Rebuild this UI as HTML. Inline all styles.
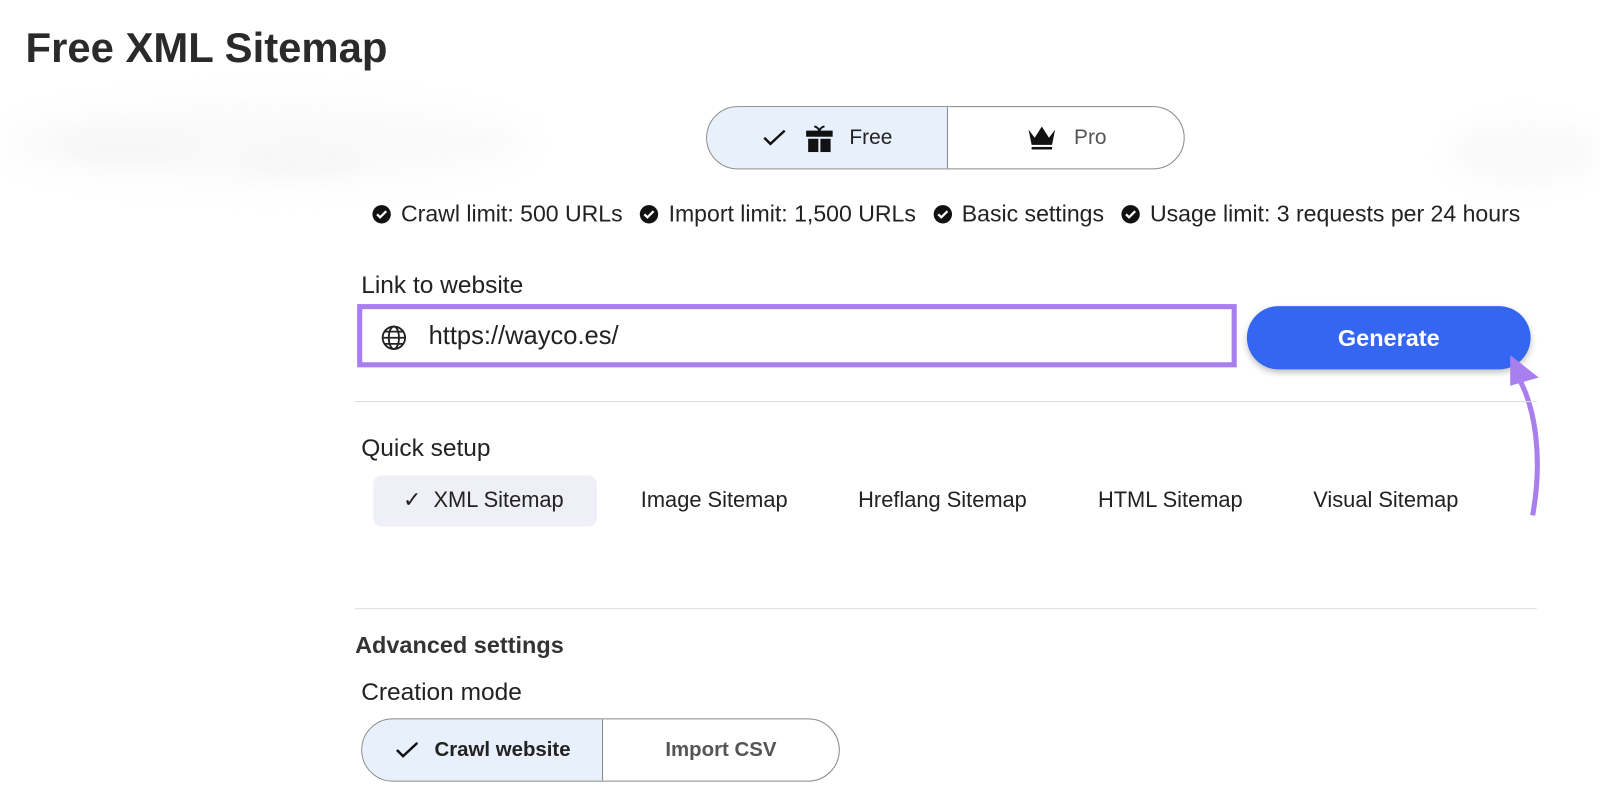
<!DOCTYPE html><html><head><style>
body{margin:0;width:1600px;height:810px;background:#fff;font-family:"Liberation Sans",Arial,sans-serif;color:#222;overflow:hidden}
#w{position:relative;width:1568px;height:794px;transform:scale(1.0204);transform-origin:0 0}
.a{position:absolute}
.cl{border-radius:50%;background:#f7f7f7;filter:blur(8px)}
</style></head><body><div id="w">
<div class="a cl" style="left:0;top:100px;width:520px;height:80px;background:#fafafa;filter:blur(14px)"></div>
<div class="a cl" style="left:60px;top:125px;width:140px;height:36px"></div>
<div class="a cl" style="left:230px;top:140px;width:130px;height:32px"></div>
<div class="a cl" style="left:1420px;top:120px;width:150px;height:60px;background:#f9f9f9;filter:blur(12px)"></div>
<div class="a" style="left:25px;top:24px;font-size:41px;font-weight:bold;color:#2a2a2a">Free XML Sitemap</div>
<div class="a" style="left:692px;top:104px;width:467px;height:60px;border:1px solid #888;border-radius:31px;overflow:hidden;display:flex">
 <div style="width:235px;background:#e7f0fb;border-right:1px solid #888;display:flex;align-items:center;justify-content:center;gap:16px;font-size:20.5px">
  <svg width="26" height="20" viewBox="0 0 26 20"><path d="M3 10l6 6L23 3" stroke="#111" stroke-width="2.4" fill="none"/></svg>
  <svg width="30" height="30" viewBox="0 0 30 30"><path d="M10 4c2 0 4 2 5 4c1-2 3-4 5-4" stroke="#111" stroke-width="2" fill="none"/><rect x="2" y="8" width="26" height="6" fill="#111"/><rect x="4" y="16" width="10" height="13" fill="#111"/><rect x="16" y="16" width="10" height="13" fill="#111"/></svg>
  <span style="margin-left:-2px;font-weight:500">Free</span></div>
 <div style="flex:1;display:flex;align-items:center;justify-content:center;gap:16px;font-size:20.5px;color:#555">
  <svg width="32" height="28" viewBox="0 0 32 28"><path d="M3 6l6 8 7-11 7 11 6-8-3 15H6z" fill="#111"/><rect x="6" y="23" width="20" height="2.5" fill="#111"/></svg><span>Pro</span></div>
</div>
<div class="a" style="left:364px;top:197px;font-size:22.6px;display:flex;gap:16px;white-space:nowrap;align-items:center">
 <svg width="20" height="20" viewBox="0 0 20 20"><circle cx="10" cy="10" r="9" fill="#111"/><path d="M5.5 10l3 3 6-6" stroke="#fff" stroke-width="2.2" fill="none"/></svg><span style="margin-left:-7px">Crawl limit: 500 URLs</span>
 <svg width="20" height="20" viewBox="0 0 20 20"><circle cx="10" cy="10" r="9" fill="#111"/><path d="M5.5 10l3 3 6-6" stroke="#fff" stroke-width="2.2" fill="none"/></svg><span style="margin-left:-7px">Import limit: 1,500 URLs</span>
 <svg width="20" height="20" viewBox="0 0 20 20"><circle cx="10" cy="10" r="9" fill="#111"/><path d="M5.5 10l3 3 6-6" stroke="#fff" stroke-width="2.2" fill="none"/></svg><span style="margin-left:-7px">Basic settings</span>
 <svg width="20" height="20" viewBox="0 0 20 20"><circle cx="10" cy="10" r="9" fill="#111"/><path d="M5.5 10l3 3 6-6" stroke="#fff" stroke-width="2.2" fill="none"/></svg><span style="margin-left:-7px">Usage limit: 3 requests per 24 hours</span>
</div>
<div class="a" style="left:354px;top:266px;font-size:24px">Link to website</div>
<div class="a" style="left:350px;top:298px;width:852px;height:52px;border:5px solid #a97ff0"></div>
<svg class="a" style="left:373px;top:318px" width="26" height="26" viewBox="0 0 26 26" fill="none" stroke="#222" stroke-width="1.8"><circle cx="13" cy="13" r="11"/><ellipse cx="13" cy="13" rx="5" ry="11"/><path d="M2 13h22M4 7h18M4 19h18"/></svg>
<div class="a" style="left:420px;top:315px;font-size:25px">https://wayco.es/</div>
<div class="a" style="left:1222px;top:300px;width:278px;height:62px;background:#3466f2;border-radius:31px;color:#fff;font-weight:bold;font-size:23px;display:flex;align-items:center;justify-content:center;box-shadow:0 3px 6px rgba(0,0,0,.25)">Generate</div>
<svg class="a" style="left:1460px;top:340px" width="60" height="170"><path d="M42 165C52 110 45 60 28 30" stroke="#a97ff0" stroke-width="5" fill="none"/><path d="M20 8L48 30L20 38z" fill="#a97ff0"/></svg>
<div class="a" style="left:348px;top:393px;width:1158px;height:1px;background:#ddd"></div>
<div class="a" style="left:354px;top:426px;font-size:24px">Quick setup</div>
<div class="a" style="left:366px;top:466px;width:219px;height:50px;background:#efeff8;border-radius:8px"></div>
<div class="a" style="left:395px;top:478px;font-size:21.4px;white-space:nowrap;width:1100px;height:30px">
 <span style="position:absolute;left:0">✓&nbsp; XML Sitemap</span><span style="position:absolute;left:233px">Image Sitemap</span><span style="position:absolute;left:446px">Hreflang Sitemap</span><span style="position:absolute;left:681px">HTML Sitemap</span><span style="position:absolute;left:892px">Visual Sitemap</span>
</div>
<div class="a" style="left:348px;top:596px;width:1158px;height:1px;background:#ddd"></div>
<div class="a" style="left:348px;top:619px;font-size:23px;font-weight:bold;color:#333">Advanced settings</div>
<div class="a" style="left:354px;top:665px;font-size:24px">Creation mode</div>
<div class="a" style="left:354px;top:704px;width:467px;height:60px;border:1px solid #888;border-radius:31px;overflow:hidden;display:flex;font-size:20px;font-weight:bold">
 <div style="width:235px;background:#e7f0fb;border-right:1px solid #888;display:flex;align-items:center;justify-content:center;gap:14px"><svg width="26" height="20" viewBox="0 0 26 20"><path d="M3 10l6 6L23 3" stroke="#111" stroke-width="2.4" fill="none"/></svg>Crawl website</div>
 <div style="flex:1;display:flex;align-items:center;justify-content:center;color:#555">Import CSV</div>
</div>
</div></body></html>
